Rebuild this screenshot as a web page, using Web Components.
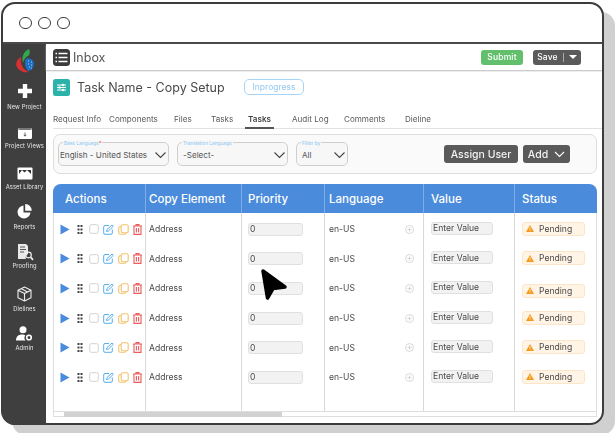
<!DOCTYPE html>
<html><head><meta charset="utf-8"><style>
html,body{margin:0;background:#fff}
body{padding:2px 0 0 1px;font-family:Inter,"Noto Sans",sans-serif;color:#444;width:616px;height:433px;overflow:hidden;box-sizing:border-box}
</style></head><body>
<app-frame>
  <side-bar slot="side"></side-bar>
  <top-bar></top-bar>
  <task-head></task-head>
  <tab-strip></tab-strip>
  <filter-panel></filter-panel>
  <task-table></task-table>
</app-frame>
<script>
function def(name, html){
  customElements.define(name, class extends HTMLElement{
    connectedCallback(){
      if(this.shadowRoot) return;
      this.attachShadow({mode:'open'}).innerHTML = typeof html==='function'?html(this):html;
    }
  });
}
const cols='91px 96px 83px 99px 91px 1fr';
const ic = {
 plus:'<svg width="18" height="18" viewBox="0 0 18 18"><path d="M9 2v14M2 9h14" stroke="#fff" stroke-width="4.4"/></svg>',
 views:'<svg width="16" height="14" viewBox="0 0 16 14"><rect x="1" y="2" width="14" height="11" rx="1.5" fill="#fff"/><path d="M1.5 3.5q0-1.5 1.500-1.500h10q1.500 0 1.500 1.500v.5h-13z" fill="#777"/><path d="M8 6.500v3.500M6.800 8.800 8 10.200l1.200-1.400" stroke="#444" stroke-width=".8" fill="none"/></svg>',
 asset:'<svg width="16" height="13" viewBox="0 0 16 13"><rect x=".5" y=".5" width="15" height="12" rx="1" fill="#fff"/><path d="M2 7l3-4 2.500 2.500L10 3l4 4V3H2z" fill="#333"/></svg>',
 reports:'<svg width="15" height="15" viewBox="0 0 15 15"><path d="M6.500 1.500a6.500 6.500 0 1 0 7 7h-7z" fill="#fff"/><path d="M8.200 0a6.500 6.500 0 0 1 6.500 6.800H8.200z" fill="#fff"/></svg>',
 proof:'<svg width="18" height="18" viewBox="0 0 18 18"><path d="M2 1h8l2 2v8a4 4 0 0 0-2 5H2z" fill="#e8e8e8"/><path d="M4 4h5M4 6.500h6M4 9h4" stroke="#555" stroke-width="1"/><circle cx="12.500" cy="12" r="2.800" fill="none" stroke="#eee" stroke-width="1.200"/><path d="M14.500 14l2.500 2.800" stroke="#eee" stroke-width="1.800"/></svg>',
 die:'<svg width="15" height="16" viewBox="0 0 15 16" fill="none" stroke="#eee" stroke-width="1.100" stroke-linejoin="round"><path d="M7.500 1 14 4.200v7.600L7.500 15 1 11.800V4.200z"/><path d="M1 4.200 7.500 7.500 14 4.200M7.500 7.500V15M4 2.600l6.500 3.300"/></svg>',
 admin:'<svg width="17" height="15" viewBox="0 0 17 15"><circle cx="7" cy="3.800" r="3.500" fill="#fff"/><path d="M0 14.500c0-4 2.500-6 6-6 1.500 0 2.500.3 3.300 1a4 4 0 0 0 .2 5z" fill="#fff"/><circle cx="13" cy="11.500" r="2.300" fill="none" stroke="#fff" stroke-width="1.600"/></svg>'
};
def('app-frame',`<style>
:host{display:block;width:603px;height:423px;box-sizing:border-box;border:2px solid #3c3c3c;border-radius:14px;background:#fff;box-shadow:11px 10px 0 #d0d0d0;filter:blur(.3px)}
.t{height:38px;border-bottom:2px solid #4a4a4a;display:flex;align-items:center;gap:6.500px;padding-left:16px;box-sizing:content-box}
.t i{width:10.500px;height:10.500px;border:1.700px solid #3c3c3c;border-radius:50%;display:block}
.b{display:flex;height:381px;border-radius:0 0 12px 12px;overflow:hidden}
.m{flex:1;min-width:0;position:relative}
.cur{position:absolute;left:214px;top:224px}
</style>
<div class="t"><i></i><i></i><i></i></div>
<div class="b"><slot name="side"></slot><div class="m"><slot></slot>
<svg class="cur" width="30" height="34" viewBox="0 0 30 34"><path d="M3 3 25 19 13 20.500 7.500 30z" fill="#000" stroke="#000" stroke-width="3.500" stroke-linejoin="round"/></svg>
</div></div>`);
def('nav-item',h=>`<style>
:host{display:flex;flex-direction:column;align-items:center;height:${h.getAttribute('h')||40}px;justify-content:flex-end;font-size:5.800px;color:#e8e8e8;white-space:nowrap;letter-spacing:.02em}
.i{display:flex;margin-bottom:${h.getAttribute('g')||2}px}
</style><div class="i">${ic[h.getAttribute('icon')]}</div><span><slot></slot></span>`);
def('side-bar',`<style>
:host{display:block;width:43px;flex:none;background:#3f3f3f;height:100%}
.l{display:flex;justify-content:center;padding-top:5px;height:25px;box-sizing:border-box;overflow:visible}
svg{overflow:visible;flex:none}
</style>
<div class="l"><svg width="18" height="24" viewBox="0 0 18 24">
<path d="M13 0C8 2 5 8 7 14 8 9 11 8 13 6 14 4 14 2 13 0z" fill="#2fa84f"/>
<path d="M5 8C1 10-1 15 1 18 3 22 8 24 13 23 8 21 4 17 5 8z" fill="#d8302f"/>
<path d="M10 10C14 8 17 11 18 14 18 19 15 22 12 22 9 18 8 14 10 10z" fill="#1f6fc4"/>
<path d="M12 12h1M15 13h1M12 15h1M15 16h1M13 18h1M15 19h1" stroke="#9fd3f5" stroke-width="1"/>
</svg></div>
<nav-item icon="plus" h="41" g="3">New Project</nav-item>
<nav-item icon="views" h="39">Project Views</nav-item>
<nav-item icon="asset" h="41" g="3">Asset Library</nav-item>
<nav-item icon="reports" h="40" g="4">Reports</nav-item>
<nav-item icon="proof" h="39" g="1">Proofing</nav-item>
<nav-item icon="die" h="43" g="3">Dielines</nav-item>
<nav-item icon="admin" h="39" g="3">Admin</nav-item>`);
def('top-bar',`<style>
:host{display:flex;align-items:center;height:26px;padding:0 21px 0 7px;box-shadow:0 1px 1.500px #bbb;font-size:12.500px;color:#555;position:relative}
svg{margin-right:3px}
b{font-weight:500;font-size:8.500px;color:#fff;height:15px;display:flex;align-items:center;justify-content:center;border-radius:3px;letter-spacing:.02em}
.s{background:#62bf6c;width:42px;margin-left:auto}
.v{background:#5a5a5a;width:48px;margin-left:10px;gap:5px}
.v i{width:1px;height:9px;background:#aaa}
.v u{width:0;height:0;border:4px solid transparent;border-top:4px solid #fff;border-bottom:0}
</style>
<svg width="17" height="17" viewBox="0 0 17 17"><rect width="17" height="17" rx="3.500" fill="#3c3c3c"/><path d="M2.500 4.500h1.500M5.500 4.500h9M2.500 8.500h1.500M5.500 8.500h9M2.500 12.500h1.500M5.500 12.500h9" stroke="#fff" stroke-width="1.500"/></svg>
<span>Inbox</span><b class="s">Submit</b><b class="v">Save <i></i><u></u></b>`);
def('task-head',`<style>
:host{display:flex;align-items:center;height:34px;padding:0 0 0 7px;box-sizing:border-box;font-size:12.500px;color:#4a4a4a}
svg{margin-right:7px;flex:none}
.n{width:167px;white-space:nowrap}
.b{width:60px;height:16px;box-sizing:border-box;border:1.500px solid #a6d4f7;border-radius:5px;font-size:8.500px;color:#93c9f2;display:flex;align-items:center;justify-content:center}
</style>
<svg width="17" height="17" viewBox="0 0 17 17"><rect width="17" height="17" rx="2.500" fill="#2bb3ab"/><path d="M4 6h9M4 8.500h9M4 11h9" stroke="#fff" stroke-width="1"/><circle cx="10" cy="6" r="1.300" fill="#fff"/><circle cx="6.500" cy="8.500" r="1.300" fill="#fff"/><circle cx="10" cy="11" r="1.300" fill="#fff"/></svg>
<span class="n">Task Name - Copy Setup</span><span class="b">Inprogress</span>`);
def('tab-strip',`<style>
:host{display:flex;height:25px;margin:0 7px;padding-top:8px;box-sizing:border-box;border-bottom:1px solid #e2e2e2;font-size:8.100px;color:#5a5a5a;white-space:nowrap;width:551px}
span{display:block;flex:none;height:17px;box-sizing:border-box;padding-top:2px}
.a{font-weight:600;color:#444;border-bottom:2px solid #555;text-align:center;margin-left:-3px}
</style>
<span style="width:56px">Request Info</span><span style="width:65px">Components</span><span style="width:37px">Files</span><span style="width:37px">Tasks</span><span class="a" style="width:29px;margin-right:18px">Tasks</span><span style="width:52px">Audit Log</span><span style="width:61px">Comments</span><span>Dieline</span>`);
def('sel-box',h=>`<style>
:host{display:flex;align-items:center;position:relative;box-sizing:border-box;height:24px;border:1px solid #cfcfcf;border-radius:5px;background:#f7f7f7;font-size:8.100px;color:#555;padding:1px 1px 0 ${h.getAttribute('pl')||1}px;white-space:nowrap;justify-content:space-between;width:${h.getAttribute('w')}px}
em{position:absolute;left:4px;top:-3px;font-style:normal;font-size:4.800px;color:#8cc6f2;background:#f7f7f7;padding:0 1px;line-height:6px}
em u{color:#e33;text-decoration:none}
</style><em>${h.getAttribute('label')}${h.hasAttribute('req')?'<u>*</u>':''}</em><span><slot></slot></span>
<svg width="13" height="8" viewBox="0 0 13 8" fill="none" stroke="#444" stroke-width="1.100"><path d="M1.500 1.500 6.500 6.500 11.500 1.500"/></svg>`);
def('filter-panel',`<style>
:host{display:flex;align-items:flex-start;height:40px;width:544px;box-sizing:border-box;margin:5px 0 0 7px;border:1px solid #ddd;border-radius:7px;background:#fafafa;padding:7px 0 0 4px;gap:8px}
.r{margin-left:auto;display:flex;gap:5px;padding:3px 26px 0 0}
b{font-weight:500;background:#5a5a5a;color:#f2f2f2;font-size:10.500px;height:18px;border-radius:3px;display:flex;align-items:center;justify-content:center;gap:6px}
</style>
<sel-box w="111" label="Base Language" req>English - United States</sel-box>
<sel-box w="111" pl="5" label="Translation Language">-Select-</sel-box>
<sel-box w="52" pl="5" label="Filter by">All</sel-box>
<div class="r"><b style="width:74px">Assign User</b><b style="width:47px">Add <svg width="11" height="7" viewBox="0 0 11 7" fill="none" stroke="#fff" stroke-width="1.100"><path d="M1 1l4.500 4.500L10 1"/></svg></b></div>`);
def('task-row',h=>`<style>
:host{display:grid;grid-template-columns:${cols};height:29.600px;font-size:8.600px;color:#4a4a4a}
.c{display:flex;align-items:center;box-sizing:border-box;border-left:1px solid #d8d8d8;min-width:0}
.c.f{border-left:0;padding-left:6px}
.i{height:13px;background:#f2f2f2;border:1px solid #e0e0e0;border-radius:3px;box-sizing:border-box;display:flex;align-items:center;padding-left:1px}
.p{width:55px;margin-left:6px}.v{width:62px;margin:-2px 0 0 7px}
.s{width:63px;height:14px;margin:-1px 0 0 7px;${h.hasAttribute('low')?'transform:translateY(3px);':''}background:#fff4e6;border:1px solid #fde6c8;border-radius:3px;box-sizing:border-box;display:flex;align-items:center;gap:5px;padding-left:3px}
svg{flex:none;display:block}
</style>
<div class="c f">
<svg width="10" height="11" viewBox="0 0 10 11" style="margin-right:7px"><path d="M.5.500 9.500 5.500.5 10.500z" fill="#4b8bdb"/></svg>
<svg width="6" height="9" viewBox="0 0 6 9" style="margin-right:6px" fill="#444"><path d="M.5 0h2v2h-2zM3.500 0h2v2h-2zM.5 3.500h2v2h-2zM3.500 3.500h2v2h-2zM.5 7h2v2h-2zM3.500 7h2v2h-2z"/></svg>
<svg width="10" height="10" viewBox="0 0 10 10" style="margin-right:4px"><rect x=".7" y=".7" width="8.600" height="8.600" rx="1.500" fill="#fff" stroke="#d2d2d2" stroke-width="1"/></svg>
<svg width="11" height="11" viewBox="0 0 11 11" style="margin-right:4px" fill="none" stroke="#55aef0" stroke-width="1"><path d="M6 1.500H2Q.7 1.500.7 3v6q0 1.300 1.300 1.300h6Q9.300 10.300 9.300 9V5.500"/><path d="M3.500 7.500l.5-2 5-4.500 1.300 1.300L5.500 7z"/></svg>
<svg width="11" height="11" viewBox="0 0 11 11" style="margin-right:4px" fill="none" stroke="#f2c26c" stroke-width="1.100"><rect x="3.200" y=".7" width="7" height="8" rx="1.500"/><path d="M3 2.500Q.7 2.500.7 4.500v4q0 1.800 1.800 1.800h4q1.500 0 1.700-1.500"/></svg>
<svg width="9" height="11" viewBox="0 0 9 11" fill="none" stroke="#ec5a5a" stroke-width="1.100"><path d="M0 2h9M3 2V.6h3V2M1 2v8.400h7V2M3.400 4v4.500M5.600 4v4.500"/></svg>
</div>
<div class="c" style="padding-left:3px"><span>Address</span></div>
<div class="c"><span class="i p">0</span></div>
<div class="c" style="padding-left:4px"><span>en-US</span>
<svg width="9" height="9" viewBox="0 0 9 9" style="margin-left:auto;margin-right:9px" fill="none" stroke="#cfcfcf" stroke-width=".8"><circle cx="4.500" cy="4.500" r="4"/><path d="M4.500 2.300v4.400M2.300 4.500h4.400"/></svg></div>
<div class="c"><span class="i v">Enter Value</span></div>
<div class="c"><span class="s"><svg width="8" height="7" viewBox="0 0 8 7"><path d="M4 0 8 7H0z" fill="#f79a1c"/><path d="M4 2.300v2.400M4 5.300v.7" stroke="#fff" stroke-width=".7"/></svg>Pending</span></div>`);
def('task-table',()=>`<style>
:host{display:block;width:544px;margin:10px 0 0 7px;height:233px;box-sizing:border-box;border:1px solid #dedede;border-top:0;border-radius:8px 8px 0 0;position:relative}
.h{display:grid;grid-template-columns:92px 96px 83px 99px 91px 1fr;height:29px;background:#4b8bdb;border-radius:8px 8px 0 0;margin:0 -1px;color:#fff;font-size:11.500px;font-weight:500}
.h span{display:flex;align-items:center;border-left:1px solid #7fadea}
.h span:first-child{border:0}
.rows{height:198px;padding-top:1.500px;box-sizing:border-box;position:relative}
.lines{position:absolute;inset:0;display:grid;grid-template-columns:${cols}}
.lines i{border-left:1px solid #d8d8d8}.lines i:first-child{border:0}
.sb{height:6px;border-top:1px solid #dedede;box-sizing:border-box;position:relative}
.sb i{display:block;height:5px;width:218px;margin-left:10px;background:#d2d2d2}
</style>
<div class="h"><span style="padding-left:12px">Actions</span><span style="padding-left:3px">Copy Element</span><span style="padding-left:6px">Priority</span><span style="padding-left:4px">Language</span><span style="padding-left:7px">Value</span><span style="padding-left:7px">Status</span></div>
<div class="rows"><div class="lines"><i></i><i></i><i></i><i></i><i></i><i></i></div><div style="position:relative">
<task-row></task-row><task-row></task-row><task-row low></task-row><task-row></task-row><task-row></task-row><task-row></task-row></div></div>
<div class="sb"><i></i></div>`);
</script>
</body></html>
